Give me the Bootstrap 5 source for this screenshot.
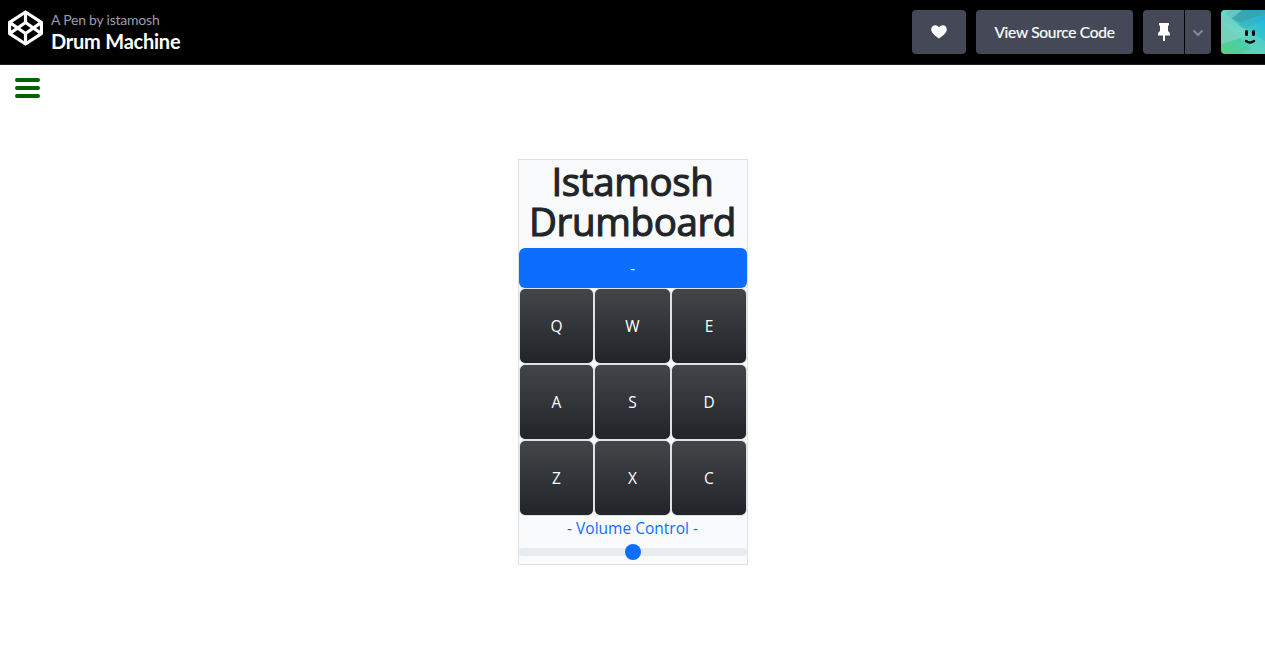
<!DOCTYPE html>
<html lang="en">
<head>
<meta charset="utf-8">
<meta name="viewport" content="width=device-width, initial-scale=1">
<title>Drum Machine</title>
<link href="https://cdn.jsdelivr.net/npm/bootstrap@5.3.0/dist/css/bootstrap.min.css" rel="stylesheet">
<style>
  body { font-family: "Open Sans", "Noto Sans", sans-serif; height: 100vh; overflow: hidden; }
  .pen-header { height: 65px; background: #000; border-bottom: 1px solid #1e1f26; font-family: Lato, sans-serif; padding: 10px 0 0 8px; overflow: hidden; }
  .pen-heading { margin-left: 7px; }
  .pen-author { color: #9b9dad; font-size: 14px; line-height: 18px; letter-spacing: -.22px; padding-top: 1px; }
  .pen-title { color: #fff; font-size: 20px; font-weight: 700; line-height: 24px; margin: 0; letter-spacing: -.23px; }
  .pen-actions { gap: 10px; }
  .pen-btn { --bs-btn-color: #fff; --bs-btn-bg: #444857; --bs-btn-hover-color: #fff; --bs-btn-hover-bg: #5a5f73; --bs-btn-border-width: 0; --bs-btn-border-radius: 4px; height: 44px; padding: 0; font-family: Lato, sans-serif; font-size: 15.5px; letter-spacing: -.27px; }
  .btn-heart { width: 54px; }
  .btn-source { width: 157px; padding-top: 2px; -webkit-text-stroke: .2px; }
  .pin-group { gap: 1px; }
  .btn-pin { width: 41px; flex: none !important; }
  .btn-more { width: 26px; flex: none !important; padding-top: 2px; }
  .pen-avatar { width: 44px; height: 44px; border-radius: 4px 0 0 4px; }
  .menu-toggle { margin: 12px 0 0 15px; width: 25px; }
  .drumboard { width: 230px; background: #f8fafc; }
  .drumboard h1 { font-size: 38.5px; line-height: 40px; font-weight: 400; letter-spacing: -.35px; -webkit-text-stroke: 1.1px; height: 80px; padding-top: 1px; white-space: nowrap; }
  .drum-display { height: 40px; line-height: 40px; }
  .drum-pads { display: grid; grid-template-columns: 75px 77px 76px; }
  .drum-pad { height: 76px; padding: 3px 0 0 1px; border: 1px solid #dee2e6; border-radius: 6px; color: #fff; background: #212529 linear-gradient(#424649, #212529); background-clip: padding-box; font-size: 15.5px; }
  .volume-label { height: 24px; line-height: 25px; font-size: 15.5px; }
  .form-range { height: 24px; display: block; }
  .form-range::-webkit-slider-runnable-track { background-color: #e9ecef; }
</style>
</head>
<body class="d-flex flex-column">
<header class="pen-header d-flex justify-content-between flex-shrink-0">
  <div class="d-flex">
    <svg width="36" height="36" viewBox="0 0 36 36" fill="none" stroke="#fff" stroke-width="3.2" stroke-linejoin="round">
      <path d="M17.5 2 33.4 12.4V23.6L17.5 34 1.6 23.6V12.4ZM17.5 2V12.5M17.5 34V23.5M1.6 12.4 17.5 23.5 33.4 12.4M1.6 23.6 17.5 12.5 33.4 23.6"/>
    </svg>
    <div class="pen-heading">
      <div class="pen-author">A Pen by istamosh</div>
      <h1 class="pen-title">Drum Machine</h1>
    </div>
  </div>
  <div class="pen-actions d-flex">
    <button class="btn pen-btn btn-heart d-flex align-items-center justify-content-center" aria-label="Like">
      <svg width="16" height="14" viewBox="0 0 16 14" fill="#fff"><path d="M8 13.5C6.8 12.6.2 8.2.2 4.4.2 2 1.9.3 4.1.3 5.8.3 7.2 1.1 8 2.5 8.8 1.1 10.2.3 11.9.3c2.2 0 3.9 1.7 3.9 4.1 0 3.8-6.6 8.2-7.8 9.1Z"/></svg>
    </button>
    <button class="btn pen-btn btn-source">View Source Code</button>
    <div class="btn-group pin-group">
      <button class="btn pen-btn btn-pin d-flex align-items-center justify-content-center" aria-label="Pin">
        <svg width="12" height="18" viewBox="0 0 12 18" fill="#fff"><path d="M1 0h10v2.5H10V8c1.3.8 2 2 2 4.5H7V18H5v-5.500H0C0 10 .7 8.800 2 8V2.500H1Z"/></svg>
      </button>
      <button class="btn pen-btn btn-more d-flex align-items-center justify-content-center ms-0" aria-label="More">
        <svg width="10" height="6" viewBox="0 0 10 6" fill="none" stroke="#868ca0" stroke-width="1.8" stroke-linecap="round" stroke-linejoin="round"><path d="m1 1 4 4 4-4"/></svg>
      </button>
    </div>
    <svg class="pen-avatar" viewBox="0 0 44 44">
      <defs><linearGradient id="sky" x1="0" y1="1" x2="1" y2="0"><stop offset="0" stop-color="#54d27d"/><stop offset=".5" stop-color="#48cbbd"/><stop offset="1" stop-color="#12b4ea"/></linearGradient></defs>
      <path fill="url(#sky)" d="M0 0h44v44H0z"/>
      <path fill="#3b9fae" d="M10 0h34v3L19 13 4 4Z" opacity=".8"/>
      <path fill="#8ad5cd" d="M0 0h21L10 9 30 25 0 34Z" opacity=".6"/>
      <path fill="#35a8bd" d="m18 14 26-11v6L24 19Z" opacity=".45"/>
      <path fill="#76dfc8" d="m0 12 30 26-10 6h24V31L23 18Z" opacity=".35"/>
      <g fill="none" stroke="#000" stroke-linecap="round"><path stroke-width="3" d="M25.5 21.5v3M32.5 21.5v3"/><path stroke-width="2.5" d="M25 31q4 3 8 0"/></g>
    </svg>
  </div>
</header>
<main class="flex-grow-1 d-flex flex-column position-relative">
  <svg class="menu-toggle position-absolute" height="21" viewBox="0 0 25 21" stroke="#006400" stroke-width="4" stroke-linecap="round"><path d="M2 3h21M2 11h21M2 19h21"/></svg>
  <section class="drumboard border text-center m-auto">
    <h1 class="mb-2">Istamosh<br>Drumboard</h1>
    <div class="drum-display bg-primary text-white rounded">-</div>
    <div class="drum-pads">
      <button class="drum-pad">Q</button><button class="drum-pad">W</button><button class="drum-pad">E</button>
      <button class="drum-pad">A</button><button class="drum-pad">S</button><button class="drum-pad">D</button>
      <button class="drum-pad">Z</button><button class="drum-pad">X</button><button class="drum-pad">C</button>
    </div>
    <div class="volume-label text-primary">- Volume Control -</div>
    <input type="range" class="form-range" min="0" max="100" value="50" aria-label="Volume">
  </section>
</main>
</body>
</html>
